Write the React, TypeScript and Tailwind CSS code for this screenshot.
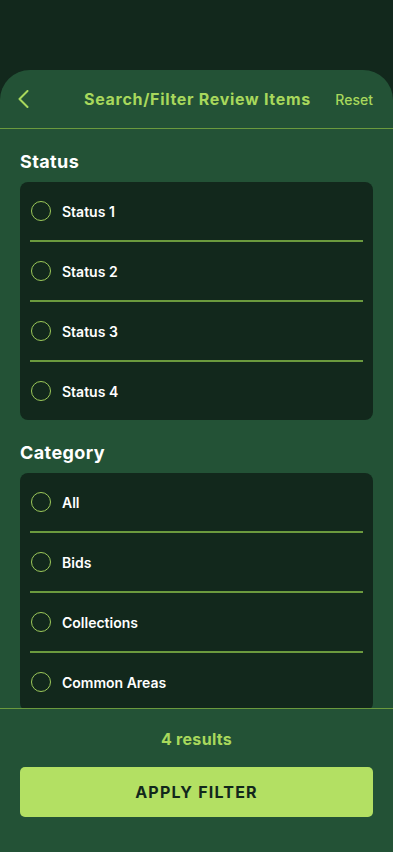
const statuses = ['Status 1', 'Status 2', 'Status 3', 'Status 4'];
const categories = ['All', 'Bids', 'Collections', 'Common Areas'];

function OptionList({ items }: { items: string[] }) {
  return (
    <div className="rounded-lg bg-[#12281c] px-[10px]">
      {items.map((item, i) => (
        <div key={item}>
          {i > 0 && <div className="h-[2px] bg-[#6b9a3e]" />}
          <div className="flex h-[58px] items-center gap-[11px] pl-px">
            <span className="h-[20px] w-[20px] shrink-0 rounded-full border border-[#9cc95a]" />
            <span className="text-[14px] font-semibold text-white">{item}</span>
          </div>
        </div>
      ))}
    </div>
  );
}

export default function App() {
  return (
    <div
      className="flex h-[852px] flex-col overflow-hidden bg-[#12281c] pt-[70px]"
      style={{ fontFamily: 'Inter, "Noto Sans", sans-serif' }}
    >
      <div className="flex min-h-0 flex-1 flex-col rounded-t-[30px] bg-[#235236]">
        <div className="flex h-[59px] items-center border-b border-[#6b9a3e] pl-[18px] pr-[20px]">
          <svg width="11" height="18" viewBox="0 0 11 18" fill="none" className="shrink-0">
            <polyline points="9.5,1 1.5,9 9.5,17" stroke="#a8d85c" strokeWidth="2" strokeLinecap="round" strokeLinejoin="round" />
          </svg>
          <div className="flex-1 pl-[55px] text-[16px] font-bold tracking-[0.7px] text-[#a8d85c]">Search/Filter Review Items</div>
          <div className="text-[14px] font-medium text-[#a8d85c]">Reset</div>
        </div>

        <div className="min-h-0 flex-1 overflow-hidden px-5">
          <h2 className="pb-[7px] pt-[19px] text-[18px] font-bold tracking-[0.4px] text-white">Status</h2>
          <OptionList items={statuses} />
          <h2 className="pb-[7px] pt-[19px] text-[18px] font-bold tracking-[0.4px] text-white">Category</h2>
          <OptionList items={categories} />
        </div>

        <div className="border-t border-[#6b9a3e] px-5 pb-[35px] pt-[18px]">
          <p className="text-center text-[16px] font-bold tracking-[0.3px] text-[#a8d85c]">4 results</p>
          <button className="mt-[16px] h-[50px] w-full rounded-[5px] bg-[#b3e063] text-[16px] font-bold tracking-[1.2px] text-[#12281c]">
            APPLY FILTER
          </button>
        </div>
      </div>
    </div>
  );
}
